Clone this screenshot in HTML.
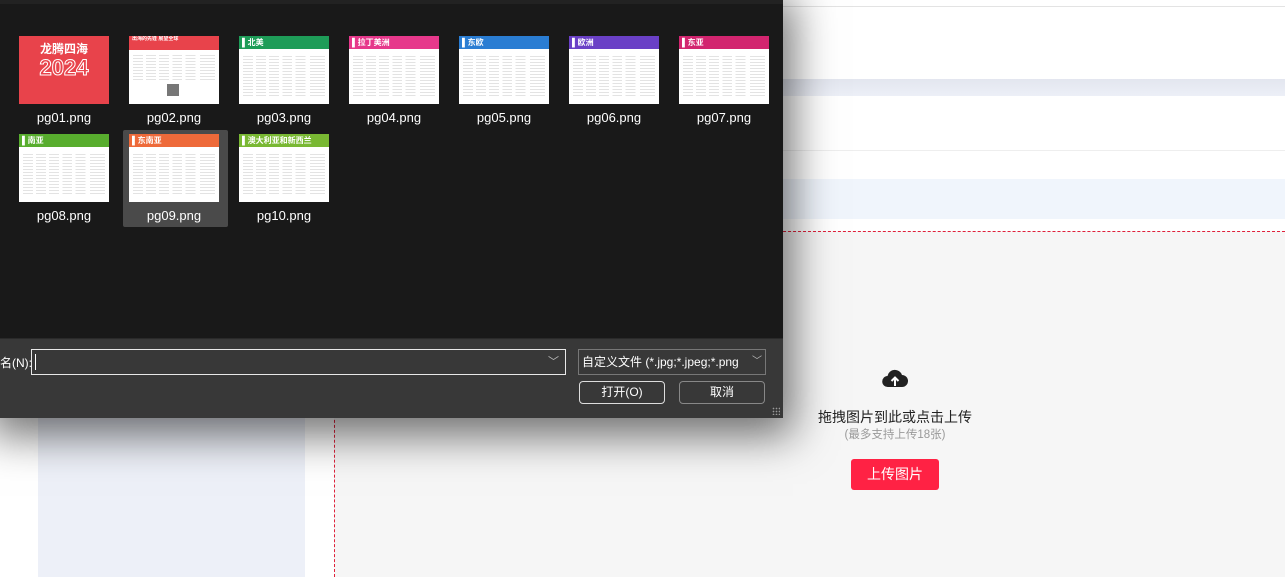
<!DOCTYPE html>
<html><head><meta charset="utf-8"><style>
*{margin:0;padding:0;box-sizing:border-box}
body{width:1285px;height:577px;overflow:hidden;position:relative;background:#fff;font-family:"Liberation Sans","Noto Sans CJK SC",sans-serif}
.abs{position:absolute}
.dlg{left:0;top:0;width:783px;height:418px;background:#191919;box-shadow:0 8px 40px 10px rgba(0,0,0,.55);}
.bot{left:0;top:338px;width:783px;height:80px;background:#383838;border-top:1px solid #2a2a2a}
.th{position:absolute;width:90px;height:68px;background:#fff;overflow:hidden}
.th .h{height:13px;color:#fff;font-size:8px;line-height:13px;padding-left:3px;font-weight:bold}
.th .ln{position:absolute;left:4px;right:4px;top:18px;bottom:6px;background:repeating-linear-gradient(0deg,#fff 0,#fff 2px,#ddd 2px,#ddd 3px);opacity:.8;
 -webkit-mask:linear-gradient(90deg,#000 0 12%,transparent 12% 16%,#000 16% 28%,transparent 28% 32%,#000 32% 44%,transparent 44% 48%,#000 48% 60%,transparent 60% 64%,#000 64% 76%,transparent 76% 82%,#000 82% 100%)}
.lb{position:absolute;width:110px;text-align:center;color:#fff;font-size:13px}
.btn{position:absolute;height:23px;border:1px solid #aaa;border-radius:4px;color:#fff;font-size:12px;text-align:center;line-height:21px;background:#383838}
</style></head><body>
<div class="abs" style="left:783px;top:6px;right:0;height:1px;background:#e3e3e3"></div>
<div class="abs" style="left:783px;top:79px;right:0;height:17px;background:linear-gradient(#e3e6ef,#eceff7)"></div>
<div class="abs" style="left:783px;top:150px;right:0;height:1px;background:#eee"></div>
<div class="abs" style="left:783px;top:179px;right:0;height:40px;background:#f0f5fc"></div>
<div class="abs" style="left:334px;top:231px;right:0;bottom:0;background:#f6f6f6;border-left:1px dashed #e0203a;border-top:1px dashed #e0203a"></div>
<div class="abs" style="left:38px;top:400px;width:267px;height:177px;background:#edf0f8"></div>
<svg class="abs" style="left:882px;top:367px" width="26" height="22" viewBox="0 0 26 22"><path d="M6 20a5.5 5.5 0 0 1-.5-11A7.5 7.5 0 0 1 20 8a6 6 0 0 1 0 12z" fill="#222"/><path d="M13 19V11M9.5 14l3.5-3.5 3.5 3.5" stroke="#fff" stroke-width="2" fill="none"/></svg>
<div class="abs" style="left:795px;top:407px;width:200px;text-align:center;font-size:14px;color:#222">拖拽图片到此或点击上传</div>
<div class="abs" style="left:795px;top:426px;width:200px;text-align:center;font-size:11.5px;color:#999">(最多支持上传18张)</div>
<div class="abs" style="left:851px;top:459px;width:88px;height:31px;background:#ff2244;border-radius:3px;color:#fff;font-size:14px;text-align:center;line-height:31px">上传图片</div>
<div class="abs dlg"></div>
<div class="abs" style="left:0;top:0;width:783px;height:4px;background:#222"></div>
<div class="abs" style="left:123px;top:130px;width:105px;height:97px;background:#4a4a4a;border-radius:2px"></div>
<div class="th" style="left:19px;top:36px;background:#e8434b;text-align:center;color:#fff"><div style="font-size:12px;margin-top:4px;font-weight:bold">龙腾四海</div><div style="font-size:22px;font-weight:bold;color:transparent;-webkit-text-stroke:1px #fff;line-height:22px">2024</div></div>
<div class="th" style="left:129px;top:36px"><div class="h" style="background:#e8434b;height:14px;font-size:5px;line-height:6px">出海的先锋 展望全球</div><div class="ln" style="top:18px;bottom:22px"></div><div style="position:absolute;left:38px;top:48px;width:12px;height:12px;background:#777"></div></div>
<div class="th" style="left:239px;top:36px"><div class="h" style="background:#1e9c58">▌北美</div><div class="ln"></div></div>
<div class="th" style="left:349px;top:36px"><div class="h" style="background:#e6388b">▌拉丁美洲</div><div class="ln"></div></div>
<div class="th" style="left:459px;top:36px"><div class="h" style="background:#2a7dd3">▌东欧</div><div class="ln"></div></div>
<div class="th" style="left:569px;top:36px"><div class="h" style="background:#6a40c6">▌欧洲</div><div class="ln"></div></div>
<div class="th" style="left:679px;top:36px"><div class="h" style="background:#d2256f">▌东亚</div><div class="ln"></div></div>
<div class="th" style="left:19px;top:134px"><div class="h" style="background:#58ad2e">▌南亚</div><div class="ln"></div></div>
<div class="th" style="left:129px;top:134px"><div class="h" style="background:#ee6a3a">▌东南亚</div><div class="ln"></div></div>
<div class="th" style="left:239px;top:134px"><div class="h" style="background:#79b833">▌澳大利亚和新西兰</div><div class="ln"></div></div>
<div class="lb" style="left:9px;top:110px">pg01.png</div>
<div class="lb" style="left:119px;top:110px">pg02.png</div>
<div class="lb" style="left:229px;top:110px">pg03.png</div>
<div class="lb" style="left:339px;top:110px">pg04.png</div>
<div class="lb" style="left:449px;top:110px">pg05.png</div>
<div class="lb" style="left:559px;top:110px">pg06.png</div>
<div class="lb" style="left:669px;top:110px">pg07.png</div>
<div class="lb" style="left:9px;top:208px">pg08.png</div>
<div class="lb" style="left:119px;top:208px">pg09.png</div>
<div class="lb" style="left:229px;top:208px">pg10.png</div>
<div class="abs bot"></div>
<div class="abs" style="left:0;top:354px;color:#fff;font-size:12px">名(N):</div>
<div class="abs" style="left:31px;top:349px;width:535px;height:26px;border:1px solid #e8e8e8;background:#383838"><div style="position:absolute;left:3px;top:4px;width:1px;height:16px;background:#fff"></div><div style="position:absolute;right:6px;top:3px;color:#bbb;font-size:11px">﹀</div></div>
<div class="abs" style="left:578px;top:349px;width:188px;height:26px;border:1px solid #777;color:#fff;font-size:12px;line-height:24px;padding-left:3px;white-space:nowrap;overflow:hidden">自定义文件 (*.jpg;*.jpeg;*.png<span style="position:absolute;right:3px;top:0;color:#bbb;font-size:10px;background:#383838">﹀</span></div>
<div class="btn" style="left:579px;top:381px;width:86px;border-color:#ddd">打开(O)</div>
<div class="btn" style="left:679px;top:381px;width:86px;border-color:#888">取消</div>
<div class="abs" style="left:772px;top:407px;width:8px;height:8px;background:radial-gradient(circle,#999 0.6px,transparent 1px) 0 0/3px 3px"></div>
</body></html>
